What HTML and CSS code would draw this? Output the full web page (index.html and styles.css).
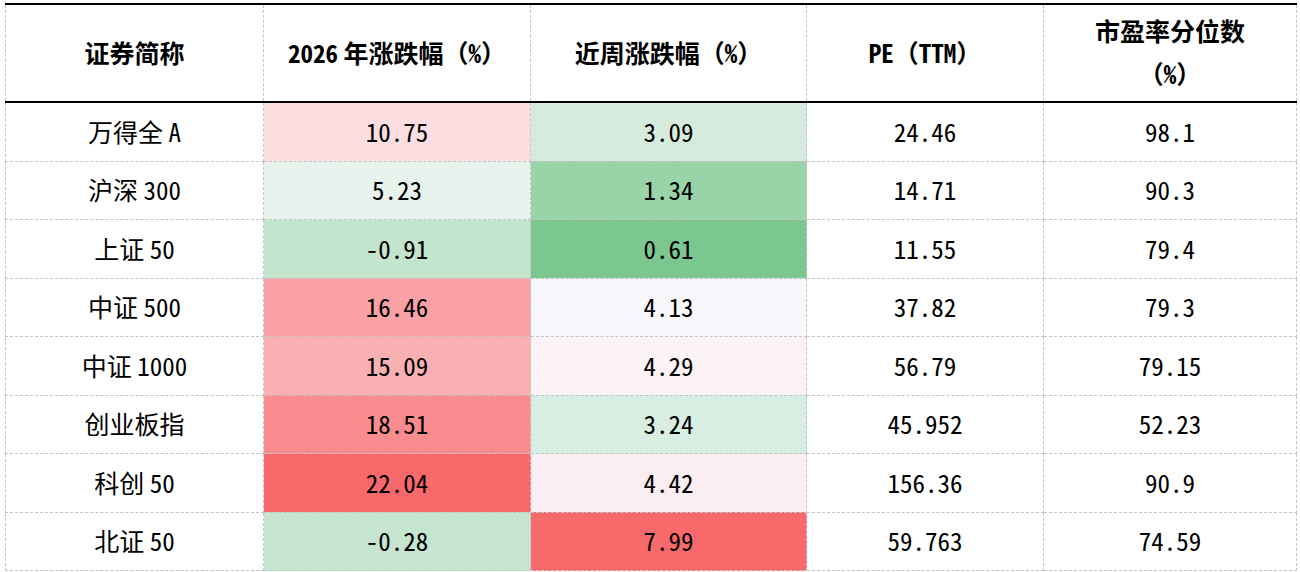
FILE: index.html
```html
<!DOCTYPE html>
<html lang="zh-CN">
<head>
<meta charset="utf-8">
<title>指数表现</title>
<link rel="stylesheet" href="styles.css">
</head>
<body>
<table class="grid">
  <colgroup>
    <col class="c1"><col class="c2"><col class="c3"><col class="c4"><col class="c5">
  </colgroup>
  <thead>
    <tr>
      <th>证券简称</th>
      <th><span class="n">2026</span> 年涨跌幅（<span class="n">%</span>）</th>
      <th>近周涨跌幅（<span class="n">%</span>）</th>
      <th><span class="n">PE</span>（<span class="n">TTM</span>）</th>
      <th class="wrap">市盈率分位数<br>（<span class="n">%</span>）</th>
    </tr>
  </thead>
  <tbody>
    <tr><td>万得全 <span class="n">A</span></td><td class="y1 n">10.75</td><td class="w1 n">3.09</td><td class="n">24.46</td><td class="n">98.1</td></tr>
    <tr><td>沪深 <span class="n">300</span></td><td class="y2 n">5.23</td><td class="w2 n">1.34</td><td class="n">14.71</td><td class="n">90.3</td></tr>
    <tr><td>上证 <span class="n">50</span></td><td class="y3 n">-0.91</td><td class="w3 n">0.61</td><td class="n">11.55</td><td class="n">79.4</td></tr>
    <tr><td>中证 <span class="n">500</span></td><td class="y4 n">16.46</td><td class="w4 n">4.13</td><td class="n">37.82</td><td class="n">79.3</td></tr>
    <tr><td>中证 <span class="n">1000</span></td><td class="y5 n">15.09</td><td class="w5 n">4.29</td><td class="n">56.79</td><td class="n">79.15</td></tr>
    <tr><td>创业板指</td><td class="y6 n">18.51</td><td class="w6 n">3.24</td><td class="n">45.952</td><td class="n">52.23</td></tr>
    <tr><td>科创 <span class="n">50</span></td><td class="y7 n">22.04</td><td class="w7 n">4.42</td><td class="n">156.36</td><td class="n">90.9</td></tr>
    <tr><td>北证 <span class="n">50</span></td><td class="y8 n">-0.28</td><td class="w8 n">7.99</td><td class="n">59.763</td><td class="n">74.59</td></tr>
  </tbody>
</table>
</body>
</html>
```

FILE: styles.css
```css
html, body {
  margin: 0;
  padding: 0;
  background: #ffffff;
}
body {
  padding: 3px 0 0 5px;
  font-family: "Noto Sans CJK SC", "Noto Sans CJK JP", sans-serif;
  color: #000000;
}
.n {
  font-feature-settings: "hwid" 1;
}
.grid {
  border-collapse: collapse;
  table-layout: fixed;
  width: 1291px;
}
.c1 { width: 258px; }
.c2 { width: 267px; }
.c3 { width: 276px; }
.c4 { width: 237px; }
.c5 { width: 253px; }

.grid th,
.grid td {
  border: 1px dashed #c4c4c4;
  text-align: center;
  vertical-align: middle;
  padding: 0 0 2px 0;
  font-size: 25px;
  line-height: 30px;
}
.grid th {
  height: 94px;
  padding-bottom: 2px;
  font-weight: 700;
  border-top: 2px solid #000000;
  border-bottom: 2px solid #000000;
}
.grid th.wrap {
  line-height: 43px;
}
.grid td {
  height: 55.5px;
  font-weight: 400;
}

.y1 { background: #fcdee0; }
.y2 { background: #e7f3ec; }
.y3 { background: #c3e5cd; }
.y4 { background: #f9a1a4; }
.y5 { background: #f9b0b3; }
.y6 { background: #f98c8f; }
.y7 { background: #f8696b; }
.y8 { background: #c6e5d0; }

.w1 { background: #d5ebdd; }
.w2 { background: #98d4a8; }
.w3 { background: #7cc78f; }
.w4 { background: #f8f8fc; }
.w5 { background: #fbf3f6; }
.w6 { background: #d9eee2; }
.w7 { background: #fbeef3; }
.w8 { background: #f8696b; }
```
